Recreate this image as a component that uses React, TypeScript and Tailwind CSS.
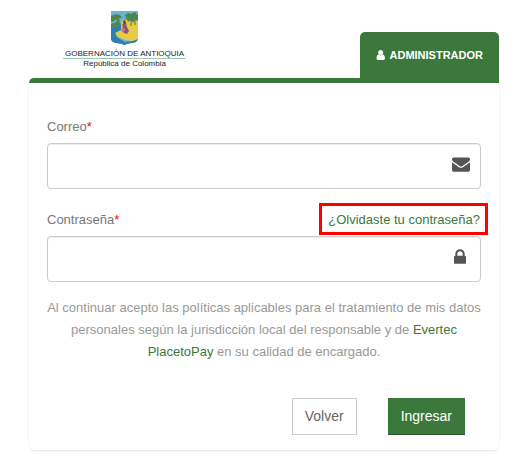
import React from "react";

type IconProps = { className?: string };

function UserIcon({ className }: IconProps) {
  return (
    <svg viewBox="192 128 1344 1536" className={className} fill="currentColor" aria-hidden="true">
      <path d="M1536 1399q0 109-62.500 187t-150.500 78h-854q-88 0-150.500-78t-62.500-187q0-85 8.500-160.500t31.500-152 58.500-131 94-89 134.500-34.500q131 128 313 128t313-128q76 0 134.500 34.500t94 89 58.500 131 31.500 152 8.500 160.500zm-256-887q0 159-112.500 271.500t-271.500 112.500-271.500-112.500-112.500-271.500 112.500-271.500 271.500-112.500 271.500 112.500 112.500 271.500z" />
    </svg>
  );
}

function EnvelopeIcon({ className }: IconProps) {
  return (
    <svg viewBox="0 0 1792 1792" className={className} fill="currentColor" aria-hidden="true">
      <path d="M1792 710v794q0 66-47 113t-113 47h-1472q-66 0-113-47t-47-113v-794q44 49 101 87 362 246 497 345 57 42 92.500 65.500t94.500 48 110 24.500h2q51 0 110-24.500t94.500-48 92.500-65.500q170-123 498-345 57-39 100-87zm0-294q0 79-49 151t-122 123q-376 261-468 325-10 7-42.500 31t-54 38.500-52 32.500-57.500 27-50 9h-2q-23 0-50-9t-57.500-27-52-32.500-54-38.500-42.500-31q-91-64-262-182.500t-205-142.500q-62-42-117-115.500t-55-136.500q0-78 41.500-130t118.500-52h1472q65 0 112.500 47t47.500 113z" />
    </svg>
  );
}

function LockIcon({ className }: IconProps) {
  return (
    <svg viewBox="320 128 1152 1408" className={className} fill="currentColor" aria-hidden="true">
      <path d="M640 768h512v-192q0-106-75-181t-181-75-181 75-75 181v192zm832 96v576q0 40-28 68t-68 28h-960q-40 0-68-28t-28-68v-576q0-40 28-68t68-28h32v-192q0-184 132-316t316-132 316 132 132 316v192h32q40 0 68 28t28 68z" />
    </svg>
  );
}

function Shield({ className }: IconProps) {
  return (
    <svg viewBox="0 0 27 34" className={className} aria-hidden="true">
      <defs>
        <clipPath id="shield">
          <path d="M0 0H27V27Q27 31 22 32Q16 32.500 13.500 34Q11 32.500 5 32Q0 31 0 27Z" />
        </clipPath>
      </defs>
      <g clipPath="url(#shield)">
        <rect width="27" height="34" fill="#6bb4d4" />
        <path d="M0 14L9 12L12 19L5 25L15 34H0Z" fill="#2c80b4" />
        <path d="M10 12L13 8L18 10L27 10V29L20 30L14 29L6 25L4 22L10 19Z" fill="#e8cb45" />
        <path d="M0 13L8 10L10 14L4 17L0 17Z" fill="#4b8a5a" />
        <path d="M6 6V14M20 6V15M24 5V14" stroke="#6d6b2c" strokeWidth="1" />
        <path d="M0 5L5 3L9 4L11 7L8 7L9 11L5 8L2 11L0 10ZM13 5L17 2L20 3L24 1L27 4V10L24 8L22 12L20 9L17 11L16 8L13 9L16 6Z" fill="#4c8748" />
        <path d="M13 11L15 12L16 16L18 20L16 23L13 22L11 20L12 16L11 14Z" fill="#8d5574" />
        <path d="M12 10L14 9L15 12L13 13Z" fill="#66372d" />
        <path d="M11 16L14 18L13 21L10 20Z" fill="#bd7f8c" />
        <path d="M0 26L7 27L14 31L22 30L27 28V34H0Z" fill="#2e7fb0" />
      </g>
    </svg>
  );
}

function Required() {
  return <span className="text-[#ff0000]">*</span>;
}

const inputClass =
  "block h-[46px] w-full rounded-[4px] border border-[#cccccc] bg-white pl-3 pr-12 text-[15px] text-[#555555] shadow-[inset_0_1px_1px_rgba(0,0,0,0.075)] outline-none focus:border-[#3c763d]";

export default function App() {
  return (
    <main className="bg-white pb-3 pl-[29px] pr-[22px] pt-[11px] font-['Liberation_Sans',Arial,sans-serif] text-[13px] leading-[22px] text-[#777777]">
      <header className="flex items-end justify-between pl-[34px]">
        <div className="flex flex-col items-center self-start text-[8px] leading-[9px] text-[#222222]">
          <Shield className="mb-1 h-[34px] w-[27px]" />
          <div className="w-full border-b border-[#9fcab0] px-[2px] text-center">GOBERNACIÓN DE ANTIOQUIA</div>
          <div>República de Colombia</div>
        </div>
        <div className="mt-[21px] flex h-[46px] items-center gap-[5px] rounded-t-[5px] bg-[#3c783c] px-4 text-[11px] font-bold text-white">
          <UserIcon className="h-[10px] w-[9px]" />
          <span>ADMINISTRADOR</span>
        </div>
      </header>

      <form
        className="rounded-[5px] rounded-tr-none border-t-[5px] border-[#3c783c] bg-white px-[18px] pb-[15px] pt-[33px] shadow-[0_1px_2px_rgba(0,0,0,0.12)]"
        onSubmit={(e) => e.preventDefault()}
      >
        <label htmlFor="correo" className="mb-[5px] block">
          Correo<Required />
        </label>
        <div className="relative">
          <input id="correo" type="email" className={inputClass} />
          <EnvelopeIcon className="pointer-events-none absolute right-[11px] top-3 h-[18px] w-[18px] text-[#555555]" />
        </div>

        <div className="mb-px mt-[14px] flex items-center justify-between">
          <label htmlFor="contrasena" className="pt-[2px]">
            Contraseña<Required />
          </label>
          <a
            href="#recuperar"
            className="-mr-[7px] flex h-8 items-center border-[3px] border-[#ff0000] pl-[6px] pr-[5px] pt-[2px] text-[#3c783c]"
          >
            ¿Olvidaste tu contraseña?
          </a>
        </div>
        <div className="relative">
          <input id="contrasena" type="password" className={inputClass} />
          <LockIcon className="pointer-events-none absolute right-[15px] top-[13px] h-[15px] w-3 text-[#555555]" />
        </div>

        <p className="mt-[15px] text-center text-[#999999]">
          Al continuar acepto las políticas aplicables para el tratamiento de mis datos personales según la
          jurisdicción local del responsable y de{" "}
          <a href="#placetopay" className="text-[#3c783c]">
            Evertec PlacetoPay
          </a>{" "}
          en su calidad de encargado.
        </p>

        <div className="mt-[35px] flex justify-end gap-[31px] pr-4 text-[14px] leading-5">
          <button type="button" className="h-[37px] border border-[#cccccc] bg-white px-3 pb-[2px] text-[#666666]">
            Volver
          </button>
          <button type="submit" className="h-[37px] border-b border-[#2b542c] bg-[#3c783c] px-[13px] text-white">
            Ingresar
          </button>
        </div>
      </form>
    </main>
  );
}
